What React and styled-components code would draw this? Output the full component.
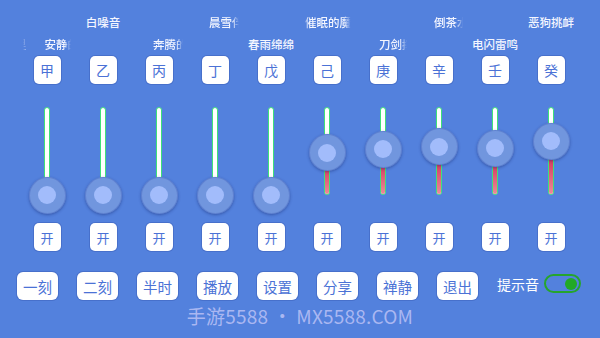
import React from "react";
import styled, { createGlobalStyle } from "styled-components";

const Global = createGlobalStyle`
  html, body { margin: 0; padding: 0; }
  body { background: #5381dd; font-family: "Noto Sans CJK SC", "Noto Sans", sans-serif; }
`;

const Page = styled.div`
  position: relative;
  width: 600px;
  height: 338px;
  overflow: hidden;
  background: #5381dd;
`;

const Grid = styled.div`
  display: grid;
  grid-template-columns: repeat(10, 56px);
  padding-left: 19px;
`;

const Column = styled.div`
  display: flex;
  flex-direction: column;
  align-items: center;
`;

const LabelArea = styled.div`
  height: 52px;
  width: 100%;
  display: flex;
  flex-direction: column;
  align-items: center;
  justify-content: ${(p) => (p.$row === 1 ? "flex-start" : "flex-end")};
  padding-top: 14px;
  box-sizing: border-box;
`;

const LabelWindow = styled.div`
  width: ${(p) => (p.$scroll ? "48px" : "56px")};
  height: 16px;
  overflow: hidden;
  display: flex;
  justify-content: ${(p) => (p.$scroll ? "flex-start" : "center")};
  ${(p) =>
    p.$scroll
      ? `-webkit-mask-image: linear-gradient(to right, transparent 0, #000 6px, #000 41px, transparent 48px);
         mask-image: linear-gradient(to right, transparent 0, #000 6px, #000 41px, transparent 48px);`
      : ""}
`;

const LabelTrack = styled.div`
  display: flex;
  gap: 18px;
  white-space: nowrap;
  font-size: 11.5px;
  line-height: 16px;
  font-weight: 500;
  color: #f4f6ff;
`;

const GanButton = styled.div`
  margin-top: 4px;
  width: 27px;
  height: 28px;
  border-radius: 5px;
  background: #ffffff;
  box-shadow: 0 0 0 1px rgba(50, 80, 170, 0.35);
  display: flex;
  align-items: center;
  justify-content: center;
  color: #4b72d6;
  font-size: 14px;
`;

const SliderBox = styled.div`
  position: relative;
  margin-top: 23px;
  width: 40px;
  height: 106px;
`;

const Track = styled.div`
  position: absolute;
  left: 50%;
  top: 0;
  width: 6px;
  height: 88px;
  margin-left: -3px;
  box-sizing: border-box;
  border: 1px solid #3fe07a;
  border-radius: 3px;
  background: #ffffff;
  overflow: hidden;
`;

const Fill = styled.div`
  position: absolute;
  left: 0;
  right: 0;
  bottom: 0;
  background: linear-gradient(to bottom, #c80f40, #ec8a99);
`;

const Knob = styled.div`
  position: absolute;
  left: 50%;
  width: 37px;
  height: 37px;
  margin-left: -18.5px;
  margin-top: -18.5px;
  border-radius: 50%;
  background: #7196de;
  box-shadow: 0 1px 3px rgba(20, 40, 110, 0.45), inset 0 0 0 1px rgba(70, 100, 190, 0.4);
  display: flex;
  align-items: center;
  justify-content: center;
`;

const KnobCore = styled.div`
  width: 18px;
  height: 18px;
  border-radius: 50%;
  background: #a2bcfb;
`;

const KaiButton = styled(GanButton)`
  margin-top: 10px;
  font-size: 13px;
`;

const BottomBar = styled.div`
  display: flex;
  align-items: center;
  gap: 19px;
  padding-left: 17px;
  margin-top: 21px;
`;

const ActionButton = styled.div`
  width: 41px;
  height: 28px;
  border-radius: 6px;
  background: #ffffff;
  box-shadow: 0 0 0 1px rgba(50, 80, 170, 0.35);
  display: flex;
  align-items: center;
  justify-content: center;
  color: #4b72d6;
  font-size: 14.5px;
`;

const ToggleGroup = styled.div`
  display: flex;
  align-items: center;
  gap: 5px;
  margin-top: -5px;
`;

const ToggleLabel = styled.span`
  color: #ffffff;
  font-size: 14px;
`;

const Toggle = styled.div`
  position: relative;
  width: 37px;
  height: 19px;
  box-sizing: border-box;
  border: 2px solid #26a52c;
  border-radius: 10px;
`;

const ToggleDot = styled.div`
  position: absolute;
  right: 2px;
  top: 1.5px;
  width: 12px;
  height: 12px;
  border-radius: 50%;
  background: #22a926;
`;

const Watermark = styled.div`
  position: absolute;
  left: 0;
  right: 0;
  top: 304px;
  text-align: center;
  color: rgba(205, 205, 250, 0.72);
  font-size: 19px;
  line-height: 24px;
  letter-spacing: 0.2px;
`;

const channels = [
  { gan: "甲", label: "安静的夜里", row: 2, scroll: true, offset: -54, value: 0 },
  { gan: "乙", label: "白噪音", row: 1, value: 0 },
  { gan: "丙", label: "奔腾的河流", row: 2, scroll: true, offset: 18, value: 0 },
  { gan: "丁", label: "晨雪伴读", row: 1, scroll: true, offset: 18, value: 0 },
  { gan: "戊", label: "春雨绵绵", row: 2, value: 0 },
  { gan: "己", label: "催眠的魔法", row: 1, scroll: true, offset: 2, value: 0.48 },
  { gan: "庚", label: "刀剑挥舞", row: 2, scroll: true, offset: 20, value: 0.52 },
  { gan: "辛", label: "倒茶水声", row: 1, scroll: true, offset: 19, value: 0.55 },
  { gan: "壬", label: "电闪雷鸣", row: 2, value: 0.53 },
  { gan: "癸", label: "恶狗挑衅", row: 1, value: 0.61 },
];

const actions = ["一刻", "二刻", "半时", "播放", "设置", "分享", "禅静", "退出"];

const TRACK = 88;

function Label({ c }) {
  return (
    <LabelWindow $scroll={c.scroll}>
      <LabelTrack style={c.scroll ? { transform: `translateX(${c.offset}px)` } : undefined}>
        <span>{c.label}</span>
        {c.scroll && <span>{c.label}</span>}
      </LabelTrack>
    </LabelWindow>
  );
}

export default function App() {
  return (
    <Page>
      <Global />
      <Grid>
        {channels.map((c) => (
          <Column key={c.gan}>
            <LabelArea $row={c.row}>
              <Label c={c} />
            </LabelArea>
            <GanButton>{c.gan}</GanButton>
            <SliderBox>
              <Track>
                <Fill style={{ height: `${c.value * TRACK}px` }} />
              </Track>
              <Knob style={{ top: `${(1 - c.value) * TRACK}px` }}>
                <KnobCore />
              </Knob>
            </SliderBox>
            <KaiButton>开</KaiButton>
          </Column>
        ))}
      </Grid>
      <BottomBar>
        {actions.map((a) => (
          <ActionButton key={a}>{a}</ActionButton>
        ))}
        <ToggleGroup>
          <ToggleLabel>提示音</ToggleLabel>
          <Toggle>
            <ToggleDot />
          </Toggle>
        </ToggleGroup>
      </BottomBar>
      <Watermark>手游5588 • MX5588.COM</Watermark>
    </Page>
  );
}
